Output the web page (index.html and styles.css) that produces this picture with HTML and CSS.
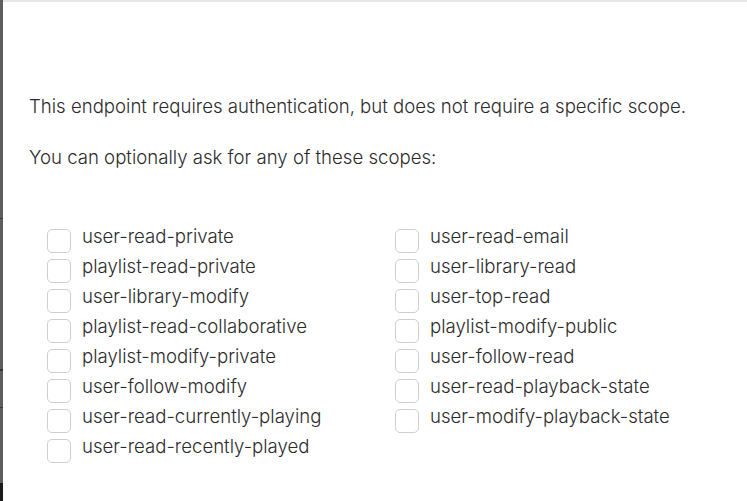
FILE: index.html
```html
<!DOCTYPE html>
<html>
<head>
<meta charset="utf-8">
<link rel="stylesheet" href="styles.css">
</head>
<body>
<div class="frame">
  <div class="sidebar-edge"></div>
  <main class="panel">
    <p class="intro">This endpoint requires authentication, but does not require a specific scope.</p>
    <p class="intro second">You can optionally ask for any of these scopes:</p>
    <div class="scopes">
      <ul class="col">
        <li><span class="box"></span><span>user-read-private</span></li>
        <li><span class="box"></span><span>playlist-read-private</span></li>
        <li><span class="box"></span><span>user-library-modify</span></li>
        <li><span class="box"></span><span>playlist-read-collaborative</span></li>
        <li><span class="box"></span><span>playlist-modify-private</span></li>
        <li><span class="box"></span><span>user-follow-modify</span></li>
        <li><span class="box"></span><span>user-read-currently-playing</span></li>
        <li><span class="box"></span><span>user-read-recently-played</span></li>
      </ul>
      <ul class="col">
        <li><span class="box"></span><span>user-read-email</span></li>
        <li><span class="box"></span><span>user-library-read</span></li>
        <li><span class="box"></span><span>user-top-read</span></li>
        <li><span class="box"></span><span>playlist-modify-public</span></li>
        <li><span class="box"></span><span>user-follow-read</span></li>
        <li><span class="box"></span><span>user-read-playback-state</span></li>
        <li><span class="box"></span><span>user-modify-playback-state</span></li>
      </ul>
    </div>
  </main>
</div>
</body>
</html>
```

FILE: styles.css
```css
html, body {
  margin: 0;
  padding: 0;
  background: #fff;
}
body {
  font-family: "Inter", sans-serif;
  font-weight: 300;
  color: #2b2b2b;
  width: 747px;
  height: 501px;
  overflow: hidden;
}
.frame {
  display: flex;
  height: 501px;
}
.sidebar-edge {
  width: 3px;
  flex: none;
  background: linear-gradient(to bottom,
    #5e5e5e 0, #5e5e5e 218px, #3a3a3a 218px, #3a3a3a 219px,
    #5e5e5e 219px, #5e5e5e 369px, #333 369px, #333 371px,
    #5e5e5e 371px, #5e5e5e 407px, #3a3a3a 407px, #3a3a3a 408px,
    #5e5e5e 408px, #5e5e5e 483px, #1a1a1a 483px, #1a1a1a 501px);
}
.panel {
  flex: 1;
  border-top: 2px solid #e6e6e6;
  padding: 92px 0 0 26px;
}
.intro {
  margin: 0;
  font-size: 18.6px;
  line-height: 24px;
}
.intro.second {
  margin-top: 27px;
}
.scopes {
  display: flex;
  margin-top: 52px;
  padding-left: 18px;
}
.col {
  list-style: none;
  margin: 0;
  padding: 0;
  width: 348px;
}
.col li {
  display: flex;
  align-items: flex-start;
  height: 30px;
  font-size: 18.6px;
  line-height: 30px;
}
.box {
  width: 22px;
  height: 22px;
  border: 1.5px solid #cfcfcf;
  border-radius: 5px;
  margin-top: 8px;
  margin-right: 11px;
  flex: none;
}
```
